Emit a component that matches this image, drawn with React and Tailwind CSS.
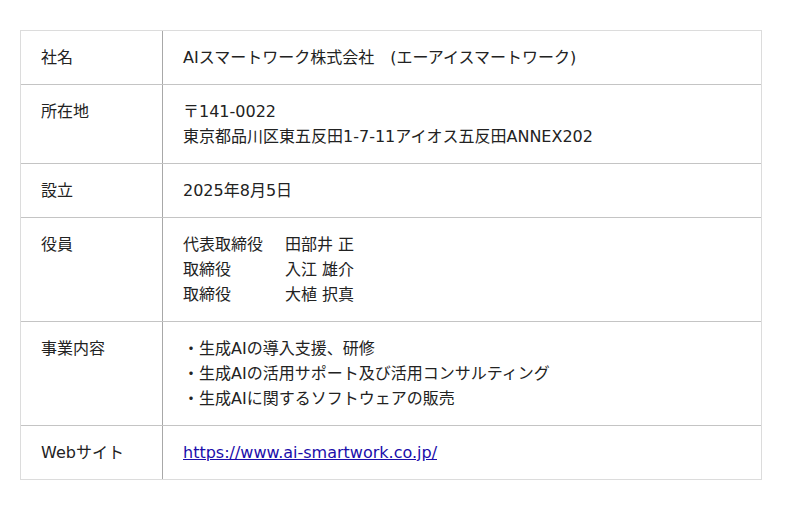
const ROWS = [
    { label: '社名', value: ['AIスマートワーク株式会社\u3000(エーアイスマートワーク)'] },
    { label: '所在地', value: ['〒141-0022', '東京都品川区東五反田1-7-11アイオス五反田ANNEX202'] },
    { label: '設立', value: ['2025年8月5日'] },
    { label: '役員', officers: [
        ['代表取締役', '田部井 正'],
        ['取締役', '入江 雄介'],
        ['取締役', '大植 択真'],
    ] },
    { label: '事業内容', value: [
        '・生成AIの導入支援、研修',
        '・生成AIの活用サポート及び活用コンサルティング',
        '・生成AIに関するソフトウェアの販売',
    ] },
    { label: 'Webサイト', link: 'https://www.ai-smartwork.co.jp/' },
];

export default function App() {
    return (
        <div
            className="w-[800px] h-[510px] bg-white pt-[30px] px-[20px] text-[16px] leading-[25px] text-[#222]"
            style={{ fontFamily: '"DejaVu Sans", "Noto Sans CJK JP", sans-serif' }}
        >
            <div className="w-[742px] border border-[#dcdcdc]">
                {ROWS.map((row, i) => (
                    <div
                        key={row.label}
                        className={`flex ${i > 0 ? 'border-t border-[#c4c4c4]' : ''}`}
                    >
                        <div className="w-[142px] shrink-0 border-r border-[#a8a8a8] px-[20px] py-[14px]">
                            {row.label}
                        </div>
                        <div className="flex-1 px-[20px] py-[14px]">
                            {row.value && row.value.map((line) => (
                                <div key={line}>{line}</div>
                            ))}
                            {row.officers && row.officers.map(([title, name], j) => (
                                <div key={j} className="flex">
                                    <span className="w-[102px]">{title}</span>
                                    <span>{name}</span>
                                </div>
                            ))}
                            {row.link && (
                                <a href={row.link} className="text-[#1a0dab] underline">
                                    {row.link}
                                </a>
                            )}
                        </div>
                    </div>
                ))}
            </div>
        </div>
    );
}
